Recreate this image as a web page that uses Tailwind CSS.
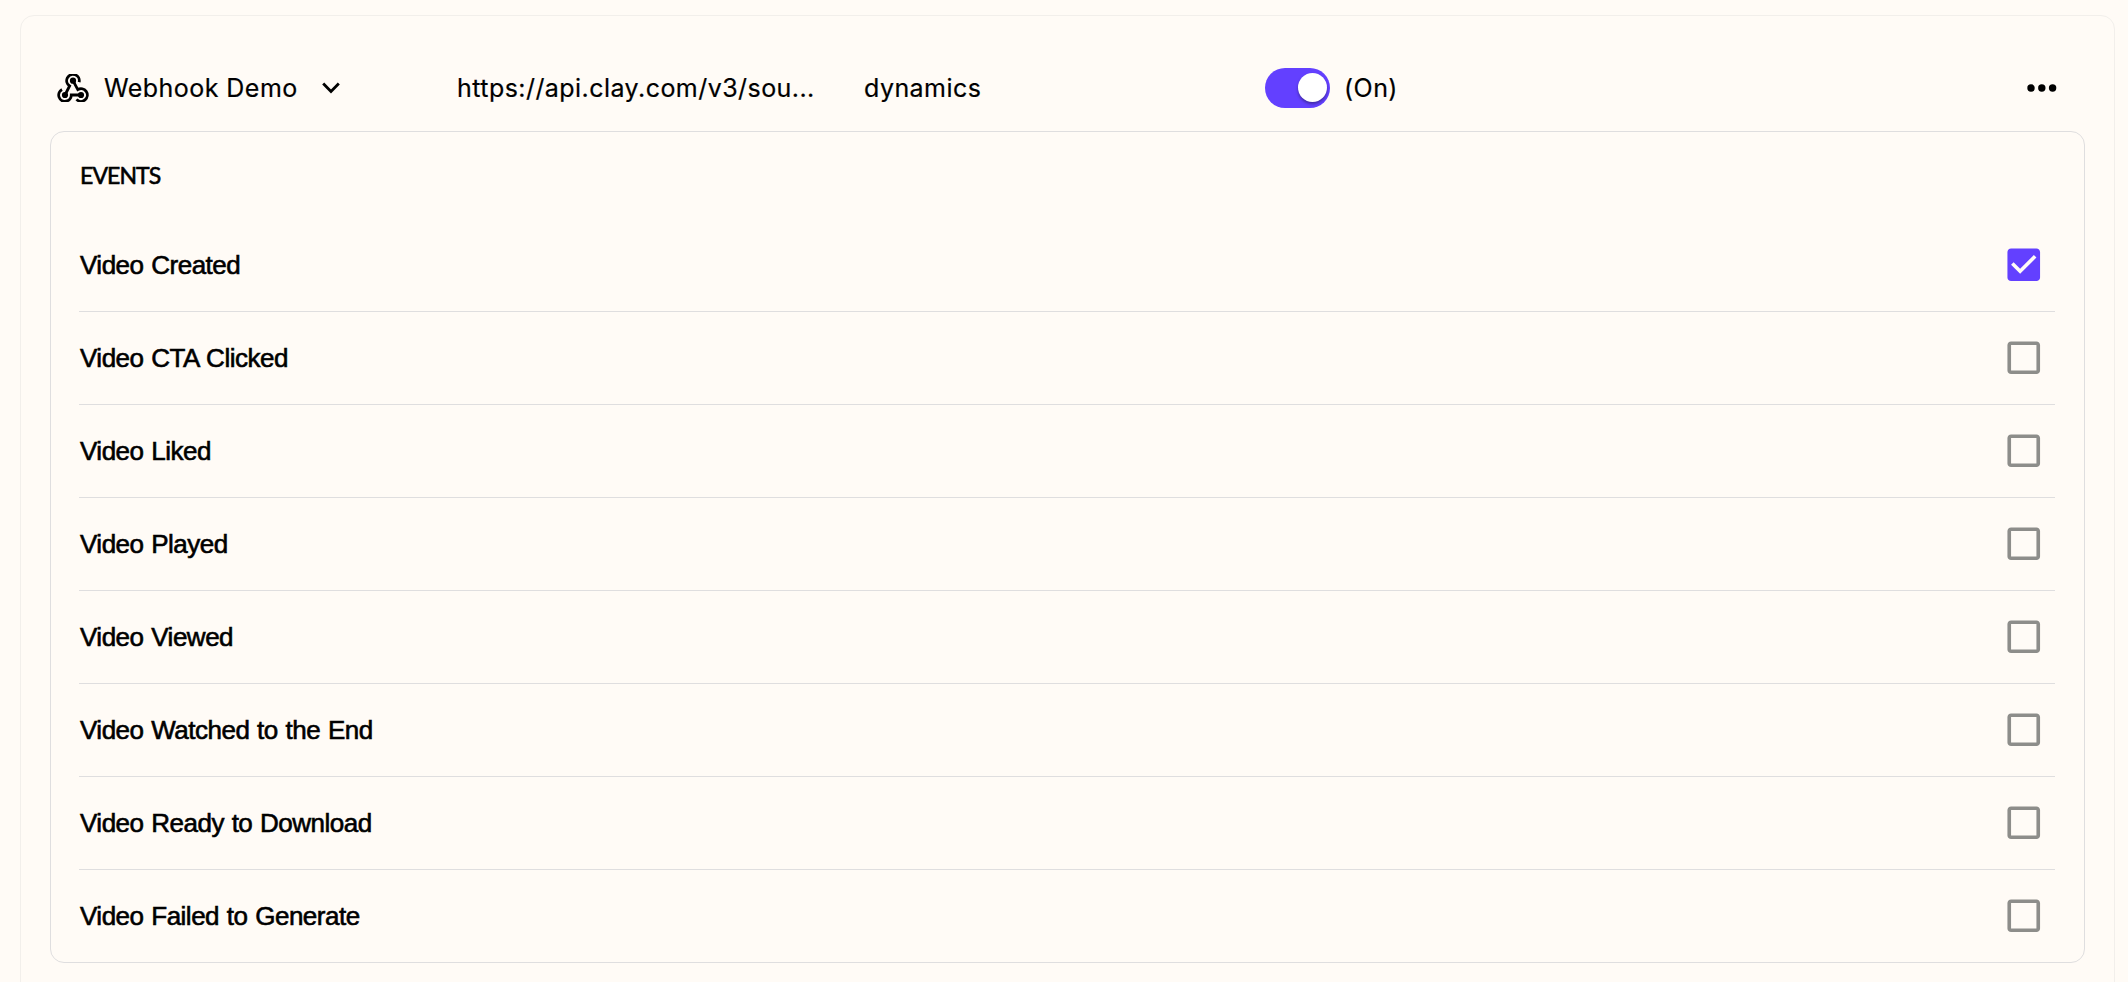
<!DOCTYPE html>
<html lang="en">
  <head>
    <meta charset="UTF-8" />
    <meta name="viewport" content="width=device-width, initial-scale=1.0" />
    <title>Webhooks</title>
    <script src="https://cdn.jsdelivr.net/npm/@tailwindcss/browser@4"></script>
  </head>
  <body class="bg-[#fffbf6] text-black overflow-hidden">
    <main class="h-screen pt-[15px] pl-5 pr-[13px]">
      <div class="h-[1000px] border border-[#f2efeb] rounded-[14px] px-[29px]">
        <!-- Webhook header row -->
        <div class="flex items-center h-[115px] pt-[29px] pb-[1px] font-['Inter',sans-serif] text-[25px] leading-8 tracking-[0.45px] [-webkit-text-stroke:0.2px_#000]">
          <div class="w-[407px] flex items-center pl-[7px]">
            <svg class="w-8 h-7" viewBox="7 9 32 28" fill="none" stroke="#000" stroke-width="2.8">
              <path d="M29.1 17.2A6.3 6.3 0 1 0 19.6 21L15 30" />
              <path d="M12 24.5A6.3 6.3 0 1 0 21.3 30H31" />
              <path d="M26.5 34.4A6.3 6.3 0 1 0 27.8 24.6L23 15.7" />
              <g fill="#000" stroke="none">
                <circle cx="23" cy="15.7" r="3.1" />
                <circle cx="15" cy="30" r="3.1" />
                <circle cx="31" cy="30" r="3.1" />
              </g>
            </svg>
            <span class="ml-[15px] w-[195px] whitespace-nowrap">Webhook Demo</span>
            <svg class="ml-[22px] w-5 h-3" viewBox="0 0 20 12" fill="none" stroke="#000" stroke-width="2.8">
              <path d="M2.2 1.6L10 9.6L17.8 1.6" />
            </svg>
          </div>
          <div class="w-[407px] whitespace-nowrap">https://api.clay.com/v3/sou...</div>
          <div class="w-[401px]">dynamics</div>
          <div class="flex items-center">
            <button class="w-[65px] h-10 rounded-full bg-[#6340ff] flex items-center justify-end pr-[3px]">
              <span class="w-[29px] h-[29px] rounded-full bg-white shadow-[0_2px_3px_rgba(0,0,0,0.35)]"></span>
            </button>
            <span class="ml-[14px]">(On)</span>
          </div>
          <button class="ml-auto mr-7">
            <svg class="w-[30px] h-2" viewBox="0 0 30 8">
              <circle cx="4" cy="4" r="3.7" />
              <circle cx="14.8" cy="4" r="3.7" />
              <circle cx="25.6" cy="4" r="3.7" />
            </svg>
          </button>
        </div>
        <!-- Events card -->
        <div class="border border-[#dfdedf] rounded-[14px] pl-7 pr-[29px] font-['Liberation_Sans',sans-serif]">
          <div class="h-[87px] pt-[25px]">
            <h2 class="pl-px font-['Lato',sans-serif] text-[23px] leading-9 tracking-[-0.9px] [-webkit-text-stroke:0.6px_#000]">EVENTS</h2>
          </div>
          <div class="event-list divide-y divide-[#dfdedf] text-[26px] tracking-[-0.5px] [word-spacing:1px] [-webkit-text-stroke:0.6px_#000]"></div>
        </div>
      </div>
    </main>

    <script>
      const events = [
        { name: "Video Created", checked: true },
        { name: "Video CTA Clicked" },
        { name: "Video Liked" },
        { name: "Video Played" },
        { name: "Video Viewed" },
        { name: "Video Watched to the End" },
        { name: "Video Ready to Download" },
        { name: "Video Failed to Generate" },
      ];

      const boxIcon = `<svg class="w-[43.5px] h-[43.5px]" viewBox="0 0 24 24" fill="#8d8d8a">
        <path d="M19 5v14H5V5h14m0-2H5c-1.1 0-2 .9-2 2v14c0 1.1.9 2 2 2h14c1.1 0 2-.9 2-2V5c0-1.1-.9-2-2-2z" />
      </svg>`;
      const checkedIcon = `<svg class="w-[43.5px] h-[43.5px]" viewBox="0 0 24 24" fill="#6340ff">
        <path d="M19 3H5c-1.11 0-2 .9-2 2v14c0 1.1.89 2 2 2h14c1.11 0 2-.9 2-2V5c0-1.1-.89-2-2-2zm-9 14l-5-5 1.41-1.41L10 14.17l7.59-7.59L19 8l-9 9z" />
      </svg>`;

      const list = document.querySelector(".event-list");
      events.forEach((event) => {
        const row = document.createElement("div");
        row.className = "flex items-center justify-between h-[93px] last:h-[92px] pb-[1px] pr-[10px]";
        row.innerHTML = `<span class="pt-[2px] pl-px">${event.name}</span>${event.checked ? checkedIcon : boxIcon}`;
        list.appendChild(row);
      });
    </script>
  </body>
</html>
